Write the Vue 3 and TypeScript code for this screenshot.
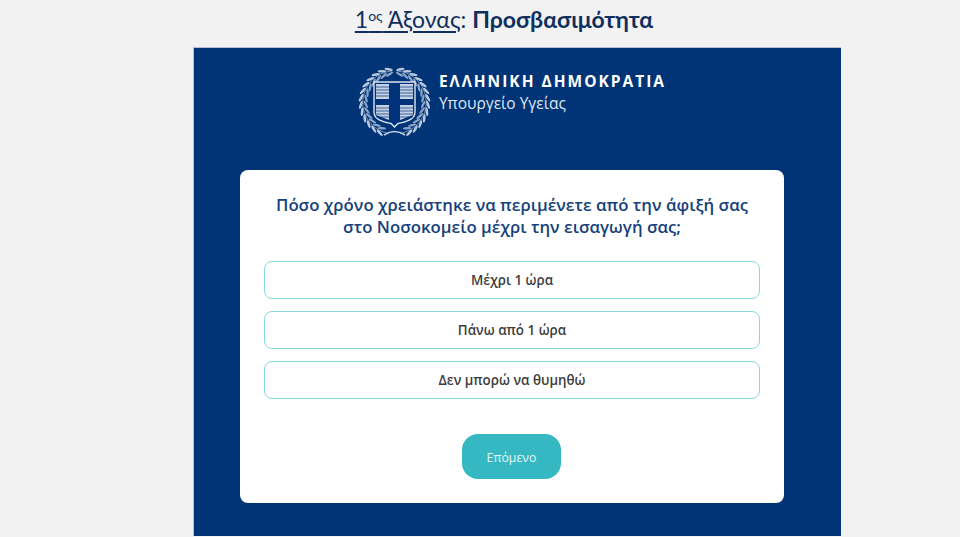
<script setup lang="ts">
const options: string[] = ['Μέχρι 1 ώρα', 'Πάνω από 1 ώρα', 'Δεν μπορώ να θυμηθώ']
const leaves = Array.from({ length: 13 }, (_, i) => i)
</script>

<template>
  <div class="page">
    <h1 class="heading">
      <span class="under">1<sup>ος</sup> Άξονας</span>: <b>Προσβασιμότητα</b>
    </h1>
    <section class="panel">
      <header class="brand">
        <svg class="emblem" width="73" height="73" viewBox="0 0 73 73" fill="none">
          <g v-for="side in [1, -1]" :key="side" :transform="side === -1 ? 'matrix(-1 0 0 1 73 0)' : undefined">
            <path d="M39 5A31.5 31.5 0 0 1 42 67.5" stroke="#8ea6c8" stroke-width="0.8" />
            <g v-for="i in leaves" :key="i" :transform="`rotate(${i * 12 + 10} 36.5 36.5)`">
              <ellipse cx="36.5" cy="2.8" rx="4.2" ry="1.3" fill="#b9c8dc" transform="rotate(-22 36.5 2.8)" />
              <ellipse cx="36.5" cy="7.8" rx="4.2" ry="1.2" fill="#8aa3c6" transform="rotate(22 36.5 7.8)" />
            </g>
          </g>
          <path d="M26 69Q36.5 62 47 69" stroke="#c3d0e2" stroke-width="1.6" />
          <path d="M16 16H57V46C57 54 47 56 40 57.5L36.5 61L33 57.5C26 56 16 54 16 46Z" fill="#00337a" stroke="#dde4ef" stroke-width="1.4" />
          <g fill="#c4d1e4">
            <path d="M18 18H31V33H18Z" />
            <path d="M42 18H55V33H42Z" />
            <path d="M18 39H31V54L18 49Z" />
            <path d="M42 39H55V49L42 54Z" />
          </g>
          <g stroke="#00337a" stroke-width="0.7">
            <path d="M18 21H31M18 24H31M18 27H31M18 30H31M42 21H55M42 24H55M42 27H55M42 30H55" />
            <path d="M18 42H31M18 45H31M18 48H31M18 51H31M42 42H55M42 45H55M42 48H55M42 51H55" />
          </g>
        </svg>
        <div class="brand-text">
          <div class="country">ΕΛΛΗΝΙΚΗ ΔΗΜΟΚΡΑΤΙΑ</div>
          <div class="ministry">Υπουργείο Υγείας</div>
        </div>
      </header>

      <div class="card">
        <h2 class="question">
          Πόσο χρόνο χρειάστηκε να περιμένετε από την άφιξή σας<br />
          στο Νοσοκομείο μέχρι την εισαγωγή σας;
        </h2>
        <div class="options">
          <button v-for="opt in options" :key="opt" class="option" type="button">{{ opt }}</button>
        </div>
        <button class="next" type="button">Επόμενο</button>
      </div>
    </section>
  </div>
</template>

<style>
html, body { margin: 0; background: #f2f2f2; }
</style>

<style scoped>
.page {
  width: 960px; height: 537px; overflow: hidden; box-sizing: border-box; padding-left: 193px;
  background: #f2f2f2; font-family: "Open Sans", "Noto Sans", sans-serif;
}
.heading {
  width: 622px; height: 47px; margin: 0; padding-top: 5px; box-sizing: border-box;
  text-align: center; font-size: 23px; line-height: 28px; font-weight: 400; color: #0f2f5f;
  font-family: "Lato", "Noto Sans", sans-serif;
}
.heading b { font-weight: 700; }
.under { text-decoration: underline; text-decoration-thickness: 1.5px; text-underline-offset: 3px; }
.heading sup { font-size: 14px; line-height: 0; vertical-align: 7px; }
.panel {
  width: 648px; height: 489px; box-sizing: border-box; background: #003476;
  border-left: 1px solid #b9c2ce; border-top: 1px solid #b9c2ce;
  padding-left: 46px;
}
.brand {
  width: 544px; height: 122px; box-sizing: border-box; padding-top: 18px;
  display: flex; align-items: flex-start; justify-content: center; gap: 8px;
}
.emblem { flex: none; }
.brand-text { color: #fff; margin-top: 5px; }
.country { font-size: 15.5px; font-weight: 700; letter-spacing: 2px; line-height: 20px; }
.ministry { font-size: 15.5px; line-height: 24px; color: #dfe6f0; }
.card {
  width: 544px; height: 333px; box-sizing: border-box; background: #fff; border-radius: 8px;
  padding: 24px 24px 0; display: flex; flex-direction: column; align-items: center;
}
.question {
  margin: 0; font-size: 16.8px; line-height: 22px; font-weight: 600; color: #163f7c; text-align: center;
}
.options { width: 100%; margin-top: 23px; display: flex; flex-direction: column; gap: 12px; }
.option {
  height: 38px; box-sizing: border-box; background: #fff; border: 1.5px solid #8ad7df; border-radius: 8px;
  font: 600 13.4px "Open Sans", sans-serif; color: #3d3d3d;
}
.next {
  margin-top: 35px; margin-right: 1px; padding-top: 2px; width: 99px; height: 45px; border: 0; border-radius: 16px; background: #36b8c2;
  color: #e6f7f8; font: 400 12.3px "Open Sans", sans-serif;
}
</style>
